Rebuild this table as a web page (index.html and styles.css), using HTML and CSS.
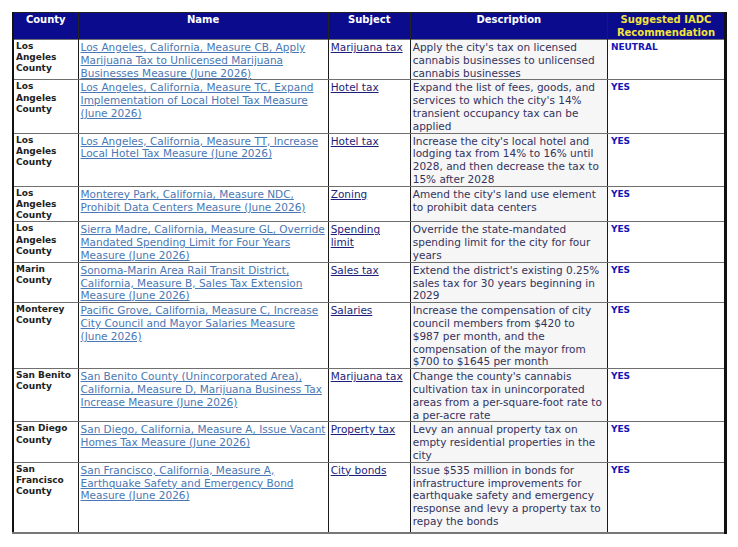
FILE: index.html
```html
<!DOCTYPE html>
<html lang="en">
<head>
<meta charset="utf-8">
<title>Measures</title>
<link rel="stylesheet" href="styles.css">
</head>
<body>
<table class="measures">
  <colgroup>
    <col class="c-county"><col class="c-name"><col class="c-subject"><col class="c-desc"><col class="c-rec">
  </colgroup>
  <thead>
    <tr>
      <th>County</th>
      <th>Name</th>
      <th>Subject</th>
      <th>Description</th>
      <th class="rec-head">Suggested IADC Recommendation</th>
    </tr>
  </thead>
  <tbody>
    <tr>
      <td class="county">Los Angeles County</td>
      <td class="name"><a href="#">Los Angeles, California, Measure CB, Apply Marijuana Tax to Unlicensed Marijuana Businesses Measure (June 2026)</a></td>
      <td class="subject"><a href="#">Marijuana tax</a></td>
      <td class="desc">Apply the city's tax on licensed cannabis businesses to unlicensed cannabis businesses</td>
      <td class="rec">NEUTRAL</td>
    </tr>
    <tr>
      <td class="county">Los Angeles County</td>
      <td class="name"><a href="#">Los Angeles, California, Measure TC, Expand Implementation of Local Hotel Tax Measure (June 2026)</a></td>
      <td class="subject"><a href="#">Hotel tax</a></td>
      <td class="desc">Expand the list of fees, goods, and services to which the city's 14% transient occupancy tax can be applied</td>
      <td class="rec">YES</td>
    </tr>
    <tr>
      <td class="county">Los Angeles County</td>
      <td class="name"><a href="#">Los Angeles, California, Measure TT, Increase Local Hotel Tax Measure (June 2026)</a></td>
      <td class="subject"><a href="#">Hotel tax</a></td>
      <td class="desc">Increase the city's local hotel and lodging tax from 14% to 16% until 2028, and then decrease the tax to 15% after 2028</td>
      <td class="rec">YES</td>
    </tr>
    <tr>
      <td class="county">Los Angeles County</td>
      <td class="name"><a href="#">Monterey Park, California, Measure NDC, Prohibit Data Centers Measure (June 2026)</a></td>
      <td class="subject"><a href="#">Zoning</a></td>
      <td class="desc">Amend the city's land use element to prohibit data centers</td>
      <td class="rec">YES</td>
    </tr>
    <tr>
      <td class="county">Los Angeles County</td>
      <td class="name"><a href="#">Sierra Madre, California, Measure GL, Override Mandated Spending Limit for Four Years Measure (June 2026)</a></td>
      <td class="subject"><a href="#">Spending limit</a></td>
      <td class="desc">Override the state-mandated spending limit for the city for four years</td>
      <td class="rec">YES</td>
    </tr>
    <tr>
      <td class="county">Marin County</td>
      <td class="name"><a href="#">Sonoma-Marin Area Rail Transit District, California, Measure B, Sales Tax Extension Measure (June 2026)</a></td>
      <td class="subject"><a href="#">Sales tax</a></td>
      <td class="desc">Extend the district's existing 0.25% sales tax for 30 years beginning in 2029</td>
      <td class="rec">YES</td>
    </tr>
    <tr>
      <td class="county">Monterey County</td>
      <td class="name"><a href="#">Pacific Grove, California, Measure C, Increase City Council and Mayor Salaries Measure<br>(June 2026)</a></td>
      <td class="subject"><a href="#">Salaries</a></td>
      <td class="desc">Increase the compensation of city council members from $420 to $987 per month, and the compensation of the mayor from $700 to $1645 per month</td>
      <td class="rec">YES</td>
    </tr>
    <tr>
      <td class="county">San Benito County</td>
      <td class="name"><a href="#">San Benito County (Unincorporated Area), California, Measure D, Marijuana Business Tax Increase Measure (June 2026)</a></td>
      <td class="subject"><a href="#">Marijuana tax</a></td>
      <td class="desc">Change the county's cannabis cultivation tax in unincorporated areas from a per-square-foot rate to a per-acre rate</td>
      <td class="rec">YES</td>
    </tr>
    <tr>
      <td class="county">San Diego County</td>
      <td class="name"><a href="#">San Diego, California, Measure A, Issue Vacant Homes Tax Measure (June 2026)</a></td>
      <td class="subject"><a href="#">Property tax</a></td>
      <td class="desc">Levy an annual property tax on empty residential properties in the city</td>
      <td class="rec">YES</td>
    </tr>
    <tr class="last">
      <td class="county">San Francisco County</td>
      <td class="name"><a href="#">San Francisco, California, Measure A, Earthquake Safety and Emergency Bond Measure (June 2026)</a></td>
      <td class="subject"><a href="#">City bonds</a></td>
      <td class="desc">Issue $535 million in bonds for infrastructure improvements for earthquake safety and emergency response and levy a property tax to repay the bonds</td>
      <td class="rec">YES</td>
    </tr>
  </tbody>
</table>
</body>
</html>
```

FILE: styles.css
```css
html, body {
  margin: 0;
  padding: 0;
  background: #ffffff;
}
body {
  padding: 12px 0 0 12px;
  font-family: "DejaVu Sans", "Liberation Sans", sans-serif;
}
.measures {
  border-collapse: collapse;
  table-layout: fixed;
  width: 715px;
  border-left: 2px solid #111;
  border-right: 3px solid #111;
  border-bottom: 2px solid #777;
}
.c-county { width: 65px; }
.c-name { width: 250px; }
.c-subject { width: 82px; }
.c-desc { width: 197px; }
.c-rec { width: 118px; }

.measures th {
  background: #0b0b8e;
  color: #ffffff;
  font-size: 10px;
  font-weight: bold;
  line-height: 12.5px;
  text-align: center;
  vertical-align: top;
  padding: 1px 2px 0;
  height: 24px;
  border-top: 1px solid #222;
  border-left: 1px solid #222;
  border-right: 1px solid #222;
}
.measures th.rec-head {
  color: #f2e43c;
}
.measures td {
  vertical-align: top;
  padding: 1px 2px 0 2px;
  font-size: 10.5px;
  line-height: 12.8px;
  border-top: 1px solid #6f6f6f;
  border-bottom: 1px solid #6f6f6f;
  border-left: 1px solid #1a1a1a;
  border-right: 1px solid #1a1a1a;
}
.measures tr.last td {
  padding-bottom: 4px;
}
.measures td.county {
  font-weight: bold;
  color: #222;
  font-size: 9px;
  line-height: 11.2px;
}
.measures td.name {
  padding-right: 0;
}
.measures td.name a {
  color: #4a78b4;
  text-decoration: underline;
}
.measures td.subject {
  padding-right: 4px;
}
.measures td.subject a {
  color: #1d1d7a;
  text-decoration: underline;
}
.measures td.desc {
  background: #f6f6f6;
  color: #33335e;
  padding-right: 2.5px;
}
.measures td.rec {
  color: #1616b4;
  font-weight: bold;
  font-size: 9px;
  line-height: 12px;
  padding-left: 3px;
}
```
